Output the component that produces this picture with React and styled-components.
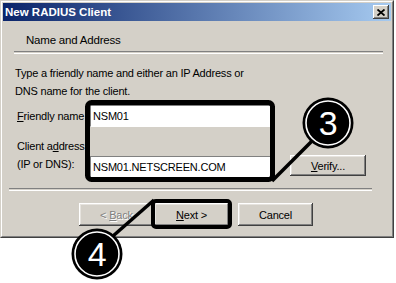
import styled, { createGlobalStyle } from 'styled-components';

const GlobalStyle = createGlobalStyle`
  html, body {
    margin: 0;
    padding: 0;
    background: #fff;
  }
  body {
    width: 396px;
    height: 283px;
    overflow: hidden;
    font-family: "Liberation Sans", Arial, sans-serif;
    font-size: 11px;
    letter-spacing: -0.2px;
    color: #000;
  }
`;

const Page = styled.div`
  position: relative;
  width: 396px;
  height: 283px;
`;

// Dialog frame with the classic 3D edge
const Window = styled.div`
  box-sizing: border-box;
  width: 394px;
  height: 238px;
  background: #d4d0c8;
  border: 1px solid;
  border-color: #d4d0c8 #404040 #404040 #d4d0c8;
  display: flex;
  flex-direction: column;
`;

const WindowInner = styled.div`
  flex: 1;
  display: flex;
  flex-direction: column;
  border: 1px solid;
  border-color: #fff #808080 #808080 #fff;
  padding: 1px;
`;

const TitleBar = styled.div`
  height: 18px;
  display: flex;
  align-items: center;
  justify-content: space-between;
  padding: 0 2px 0 2px;
  background: linear-gradient(to right, #0a246a, #a6caf0);
`;

const Title = styled.span`
  color: #fff;
  font-weight: bold;
  font-size: 11.5px;
  letter-spacing: 0;
`;

const CloseButton = styled.div`
  box-sizing: border-box;
  width: 16px;
  height: 14px;
  background: #d4d0c8;
  display: flex;
  align-items: center;
  justify-content: center;
  box-shadow: inset -1px -1px #404040, inset 1px 1px #fff, inset -2px -2px #808080;
`;

const HeaderLabel = styled.div`
  margin: 12px 0 0 23px;
  line-height: 14px;
  font-size: 11.5px;
`;

const Etched = styled.div`
  margin: ${(p) => p.$margin};
  height: 1px;
  border-top: 1px solid #808080;
  border-bottom: 1px solid #fff;
`;

const Intro = styled.p`
  margin: 10px 0 0 12px;
  line-height: 18px;
`;

const Form = styled.div`
  display: grid;
  grid-template-columns: 73px 181px 19px 76px;
  grid-template-rows: 22px 40px;
  row-gap: 11px;
  margin: 5px 0 0 14px;
`;

const Label = styled.div`
  grid-column: 1;
  line-height: 18px;
  white-space: nowrap;
  align-self: ${(p) => (p.$top ? 'start' : 'center')};
  margin-top: ${(p) => (p.$top ? '-1px' : '0')};
`;

const TextBox = styled.div`
  grid-column: 2;
  grid-row: ${(p) => p.$row};
  box-sizing: border-box;
  height: 22px;
  align-self: end;
  background: #fff;
  border: 1px solid;
  border-color: #808080 #fff #fff #808080;
  padding: 0 2px;
  display: flex;
  align-items: center;
`;

const Button = styled.div`
  box-sizing: border-box;
  width: ${(p) => p.$width || 75}px;
  height: ${(p) => p.$height || 23}px;
  background: #d4d0c8;
  display: flex;
  align-items: center;
  justify-content: center;
  color: ${(p) => (p.$disabled ? '#808080' : '#000')};
  text-shadow: ${(p) => (p.$disabled ? '1px 1px #fff' : 'none')};
  box-shadow: inset -1px -1px #404040, inset 1px 1px #fff, inset -2px -2px #808080,
    inset 2px 2px #e6e3de;
`;

const VerifyCell = styled.div`
  grid-column: 4;
  grid-row: 2;
  align-self: end;
  margin-bottom: 2px;
`;

const Footer = styled.div`
  margin-top: auto;
  padding-bottom: 9px;
`;

const ButtonRow = styled.div`
  display: flex;
  margin: 12px 0 0 76px;
`;

const Spacer = styled.div`
  width: ${(p) => p.$w}px;
`;

const Overlay = styled.svg`
  position: absolute;
  left: 0;
  top: 0;
  pointer-events: none;
`;

function Callout({ cx, cy, n }) {
  return (
    <g>
      <circle cx={cx} cy={cy} r={25.5} fill="#000" />
      <circle cx={cx} cy={cy} r={22} fill="none" stroke="#fff" strokeWidth={1.6} />
      <text
        x={cx}
        y={cy + 12}
        textAnchor="middle"
        fill="#fff"
        fontSize="34"
        fontFamily="Liberation Sans, Arial, sans-serif"
      >
        {n}
      </text>
    </g>
  );
}

export default function App() {
  return (
    <Page>
      <GlobalStyle />
      <Window>
        <WindowInner>
          <TitleBar>
            <Title>New RADIUS Client</Title>
            <CloseButton>
              <svg width="8" height="7" viewBox="0 0 8 7">
                <path d="M0.5 0.5 L7.5 6.5 M7.5 0.5 L0.5 6.5" stroke="#000" strokeWidth="1.8" />
              </svg>
            </CloseButton>
          </TitleBar>

          <HeaderLabel>Name and Address</HeaderLabel>
          <Etched $margin="4px 8px 0 11px" />

          <Intro>
            Type a friendly name and either an IP Address or
            <br />
            DNS name for the client.
          </Intro>

          <Form>
            <Label>
              <u>F</u>riendly name
            </Label>
            <TextBox $row={1}>NSM01</TextBox>
            <Label $top>
              Client a<u>d</u>dress
              <br />
              (IP or DNS):
            </Label>
            <TextBox $row={2}>NSM01.NETSCREEN.COM</TextBox>
            <VerifyCell>
              <Button $width={76} $height={21}>
                <span>
                  <u>V</u>erify...
                </span>
              </Button>
            </VerifyCell>
          </Form>

          <Footer>
            <Etched $margin="0 19px 0 6px" />
            <ButtonRow>
              <Button $disabled>
                <span>
                  &lt; <u>B</u>ack
                </span>
              </Button>
              <Button>
                <span>
                  <u>N</u>ext &gt;
                </span>
              </Button>
              <Spacer $w={9} />
              <Button>Cancel</Button>
            </ButtonRow>
          </Footer>
        </WindowInner>
      </Window>

      <Overlay width="396" height="283" viewBox="0 0 396 283">
        <rect x="87.5" y="102.5" width="185" height="77" rx="4" fill="none" stroke="#000" strokeWidth="5" />
        <rect x="153" y="201" width="77" height="26" rx="3" fill="none" stroke="#000" strokeWidth="4" />
        <line x1="312" y1="141" x2="272" y2="181" stroke="#000" strokeWidth="3.5" />
        <line x1="113" y1="236" x2="154" y2="200" stroke="#000" strokeWidth="3.5" />
        <Callout cx={328} cy={123} n="3" />
        <Callout cx={97} cy={254} n="4" />
      </Overlay>
    </Page>
  );
}
